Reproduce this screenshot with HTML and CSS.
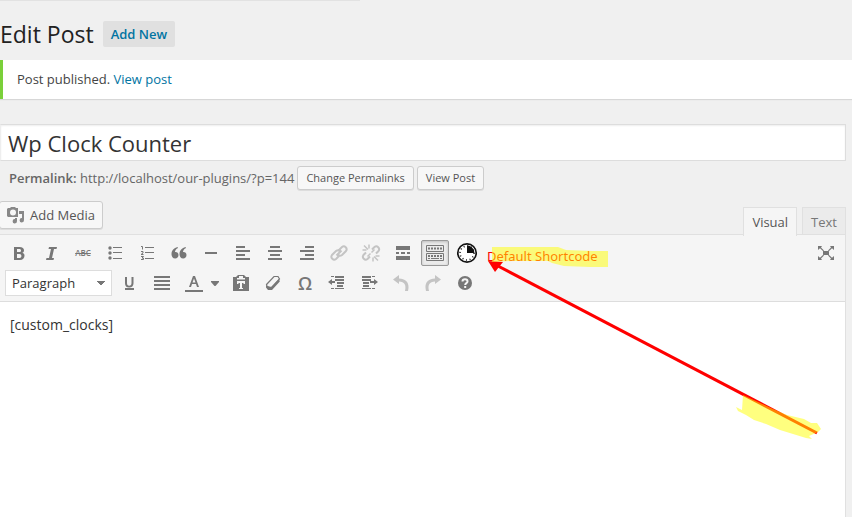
FILE: index.html
```html
<!DOCTYPE html>
<html lang="en">
<head>
<meta charset="utf-8">
<title>Edit Post</title>
<link rel="stylesheet" href="styles.css">
</head>
<body>
<main class="page">
  <div class="screen-meta"></div>
  <header class="heading">
    <h1>Edit Post</h1>
    <a class="add-new" href="#">Add New</a>
  </header>
  <div class="notice"><p>Post published. <a href="#">View post</a></p></div>

  <div class="post-body">
    <input class="title" type="text" value="Wp Clock Counter" aria-label="Title">
    <div class="permalink">
      <span><strong>Permalink:</strong> http://localhost/our-plugins/?p=144</span>
      <button class="button small" type="button">Change Permalinks</button>
      <button class="button small" type="button">View Post</button>
    </div>

    <div class="editor-tools">
      <button class="button media" type="button">
        <svg width="18" height="18" viewBox="0 0 18 18" aria-hidden="true"><path fill="#888" fill-rule="evenodd" d="M1 2h2l1-1h4l1 1h2v9H1L0 10V3zM6 3.500a3 3 0 1 0 0 6a3 3 0 0 0 0-6z"/><path fill="#888" d="M12 5h5v9a2.200 2.200 0 1 1-2-2V8h-3zM8 12h2v3a2.200 2.200 0 1 1-2-2z"/></svg>
        Add Media</button>
      <div class="tabs">
        <button class="tab active" type="button">Visual</button>
        <button class="tab" type="button">Text</button>
      </div>
    </div>

    <section class="editor">
      <div class="toolbar">
        <div class="row">
          <button class="tool" type="button" aria-label="Bold"><svg viewBox="0 0 20 20"><path fill-rule="evenodd" d="M5 4h5.500C13.500 4 15 5.300 15 7.200c0 1.300-.7 2.200-1.700 2.600 1.400.4 2.200 1.400 2.200 2.900 0 2.200-1.700 4.300-4.500 4.300H5zm3 2v3h2.200c1.200 0 1.800-.5 1.800-1.500S11.400 6 10.200 6zm0 5v4h2.600c1.200 0 1.800-.8 1.800-2 0-1.300-.6-2-1.900-2z"/></svg></button>
          <button class="tool" type="button" aria-label="Italic"><svg viewBox="0 0 20 20"><path d="M8 4h8l-.5 2h-2.500L11 15h2l-.5 2H5l.5-2H8l2-9H7.500z"/></svg></button>
          <button class="tool" type="button" aria-label="Strikethrough"><s class="abc">ABC</s></button>
          <button class="tool" type="button" aria-label="Bulleted list"><svg viewBox="0 0 20 20"><path d="M8 4h9v1H8zM8 9h9v1H8zM8 15h9v1H8z"/><circle cx="5" cy="5" r="1.700"/><circle cx="5" cy="10" r="1.700"/><circle cx="5" cy="15" r="1.700"/></svg></button>
          <button class="tool" type="button" aria-label="Numbered list"><svg viewBox="0 0 20 20"><path d="M8 4h9v1H8zM8 9h9v1H8zM8 15h9v1H8z"/><path class="line" stroke-width="1" d="M4 3.500h1.500v3M4 8.500h2v1.500L4 11.500h2.500M4 13.500h2.500L5 15h1.500v1.500H4"/></svg></button>
          <button class="tool" type="button" aria-label="Quote"><svg viewBox="0 0 20 20"><path d="M8.500 4L9 5C7 6 6 7.500 6 9c2-.3 3.500 1 3.500 3S8 15.500 6.200 15.500C3.800 15.500 2.500 13.700 2.500 11c0-3.500 2.500-6 6-7zM16.500 4l.5 1c-2 1-3 2.500-3 4 2-.3 3.500 1 3.500 3S16 15.500 14.200 15.500c-2.400 0-3.700-1.800-3.700-4.500 0-3.500 2.500-6 6-7z"/></svg></button>
          <button class="tool" type="button" aria-label="Horizontal line"><svg viewBox="0 0 20 20"><path d="M4 9h12v2H4z"/></svg></button>
          <button class="tool" type="button" aria-label="Align left"><svg viewBox="0 0 20 20"><path d="M3 3h9v2H3zM3 7h14v2H3zM3 11h9v2H3zM3 15h14v2H3z"/></svg></button>
          <button class="tool" type="button" aria-label="Align center"><svg viewBox="0 0 20 20"><path d="M5 3h10v2H5zM3 7h14v2H3zM5 11h10v2H5zM3 15h14v2H3z"/></svg></button>
          <button class="tool" type="button" aria-label="Align right"><svg viewBox="0 0 20 20"><path d="M8 3h9v2H8zM3 7h14v2H3zM8 11h9v2H8zM3 15h14v2H3z"/></svg></button>
          <button class="tool dim" type="button" aria-label="Insert link"><svg viewBox="0 0 20 20"><path class="line" stroke-width="2" d="M9 8l4-4c2.500-2 6 1.200 4 4l-4 4c-1.200 1-2.800 1-4 0M11 12l-4 4c-2.500 2-6-1.200-4-4l4-4c1.200-1 2.800-1 4 0M7.500 12.500l5-5"/></svg></button>
          <button class="tool dim" type="button" aria-label="Remove link"><svg viewBox="0 0 20 20"><path class="line" stroke-width="2" d="M11 6.500l2.500-2.500c2.500-2 6 1.200 4 4L15 10.500M9 13.500L6.500 16c-2.500 2-6-1.200-4-4L5 9.500"/><path class="line" stroke-width="1.500" d="M8 1.500v4M3 2.500l4 4M1.500 7h4M12 14.500v4M13 13.500l4 4M14.500 13h4M6.500 13.500l3-3M10.500 9.500l3-3"/></svg></button>
          <button class="tool" type="button" aria-label="Read more"><svg viewBox="0 0 20 20"><path d="M3 3h14v4H3zM3 9h3v2H3zM8 9h4v2H8zM14 9h3v2h-3zM3 13h14v4H3z"/></svg></button>
          <button class="tool pressed" type="button" aria-label="Toolbar toggle"><svg viewBox="0 0 20 20"><path class="line" stroke-width="1" d="M1.500 2.500h17v6h-17zM1.500 10.500h17v7h-17z"/><path class="line" stroke-width="2" stroke-dasharray="2 1" d="M3 5.500h14M3 13h14"/><path class="line" stroke-width="1" d="M3 15.500h2M6 15.500h8M15 15.500h2"/></svg></button>
          <button class="tool clock" type="button" aria-label="Clock"><svg viewBox="0 0 22 22"><circle cx="11" cy="11" r="9.200" fill="#fff" stroke="#111" stroke-width="1.700"/><circle cx="11" cy="11" r="7" fill="none" stroke="#111" stroke-width="1.600" stroke-dasharray="1 2.665"/><path fill="#111" d="M11 3.500v7.500h7.500A7.500 7.500 0 0 0 11 3.500z"/></svg></button>
          <button class="tool fullscreen" type="button" aria-label="Distraction-free writing"><svg viewBox="0 0 20 20"><path d="M7 8h6v4H7zM2 3h4L5 4.500l3 3-.8.800-3.200-3L2 7zM18 3h-4l1 1.500-3 3 .8.800 3.200-3L18 7zM2 17h4l-1-1.500 3-3-.8-.8-3.200 3L2 13zM18 17h-4l1-1.500-3-3 .8-.8 3.200 3L18 13z"/></svg></button>
        </div>
        <div class="row">
          <select class="format" aria-label="Format"><option>Paragraph</option></select>
          <button class="tool" type="button" aria-label="Underline"><svg viewBox="0 0 20 20"><path d="M5 4h2v6c0 2 .7 2.700 2.200 2.700s2.300-.8 2.300-2.700V4h2v6.200c0 2.800-1.600 4.200-4.300 4.200S5 13 5 10.200zM5 15h9v2H5z"/></svg></button>
          <button class="tool" type="button" aria-label="Justify"><svg viewBox="0 0 20 20"><path d="M2 3h16v2H2zM2 7h16v2H2zM2 11h16v2H2zM2 15h16v2H2z"/></svg></button>
          <button class="tool color" type="button" aria-label="Text color"><svg viewBox="0 0 20 20"><path fill-rule="evenodd" d="M9 3h2l4 11h-2l-1-3H8l-1 3H5zm1 2.500L8.500 9.500h3zM1 17h18v2H1z"/></svg></button>
          <button class="tool caret" type="button" aria-label="Choose color"><svg viewBox="0 0 10 20"><path d="M1 8h8v1L5.500 13h-1L1 9z"/></svg></button>
          <button class="tool" type="button" aria-label="Paste as text"><svg viewBox="0 0 20 20"><path fill-rule="evenodd" d="M2 4h3l2-2h6l2 2h3v14H2zM8 3v2h4V3zM6 5v1.500h8V5zM6 8v3h1.500v-1H9v5H8v1h4v-1h-1v-5h1.500v1H14V8z"/></svg></button>
          <button class="tool" type="button" aria-label="Clear formatting"><svg viewBox="0 0 20 20"><path class="line" stroke-width="1.200" d="M3.500 11.500l7.500-8h4l1.500 2.500-8 8.500-4.500-1z"/><path d="M3 11l.5 2 4.500 1.500L16 6l.8 2.500L9 17H5l-2-2.500z"/></svg></button>
          <button class="tool" type="button" aria-label="Special character"><span class="omega">Ω</span></button>
          <button class="tool" type="button" aria-label="Decrease indent"><svg viewBox="0 0 20 20"><path d="M4 3h3v1H4zM8 3h9v2H8zM8 6h9v2H8zM10 9h7v2h-7zM10 12h6v2h-6zM8 15h9v1H8zM4 15h3v1H4zM1 9l4-3v2h3v2H5v2z"/></svg></button>
          <button class="tool" type="button" aria-label="Increase indent"><svg viewBox="0 0 20 20"><path d="M3 3h9v2H3zM13 3h3v1h-3zM3 6h9v2H3zM4 9h6v2H4zM4 12h6v2H4zM3 15h9v1H3zM13 15h3v1h-3zM19 9l-4-3v2h-4v2h4v2z"/></svg></button>
          <button class="tool dim" type="button" aria-label="Undo"><svg viewBox="0 0 20 20"><path d="M8 2v3.500c6 0 10 3.500 9.500 9.500L17 18h-3c1.500-6-.5-9.500-6-9.500V11L2 6.500z"/></svg></button>
          <button class="tool dim" type="button" aria-label="Redo"><svg viewBox="0 0 20 20"><path d="M12 2v3.500c-6 0-10 3.500-9.500 9.500L3 18h3c-1.500-6 .5-9.500 6-9.500V11l6-4.500z"/></svg></button>
          <button class="tool" type="button" aria-label="Help"><svg viewBox="0 0 20 20"><circle cx="10" cy="10" r="7"/><path fill="none" stroke="#f5f5f5" stroke-width="2" d="M7.500 8.500c0-3 5-3 5 0 0 1.800-2.300 1.500-2.300 3.500M10.200 13v2"/></svg></button>
        </div>
      </div>
      <div class="content" contenteditable="true" role="textbox" aria-label="Post content">[custom_clocks]</div>
    </section>
  </div>

  <div class="annotation">
    <span class="note">Default Shortcode</span>
    <svg width="852" height="517" viewBox="0 0 852 517" aria-hidden="true">
      <path d="M817 433L498 266" stroke="#f00" stroke-width="3"/>
      <path d="M488 261l15 1-8 10z" fill="#f00"/>
      <path fill="#ff0" fill-opacity=".5" d="M492 247h66l8 3 27 1h15v16h-18l-26-1-12-3-4-2h-36l-20 1zM743 395l30 14 14 6 17 4 7 4h6l4 6-3 3-9 4 3 3-6-1-26-8-14-6-12-4-8-5-8-4-2-4 6 3z"/>
    </svg>
  </div>
</main>
</body>
</html>
```
FILE: styles.css
```css
* { box-sizing: border-box; }

body {
  margin: 0;
  background: #f0f0f0;
  color: #444;
  font: 13px/20px "Open Sans", sans-serif;
}

button, input, select { font: inherit; color: inherit; margin: 0; }
a { color: #0074a2; text-decoration: none; }

.page {
  position: relative;
  display: flex;
  flex-direction: column;
  min-height: 100vh;
  overflow: hidden;
}

.screen-meta {
  width: 360px;
  height: 1px;
  background: #e2e2e2;
}

.heading {
  display: flex;
  align-items: center;
  gap: 9px;
  padding-top: 18px;
}

h1 {
  margin: 0;
  color: #222;
  font-size: 23px;
  font-weight: 400;
  line-height: 30px;
}

.add-new {
  padding: 3px 8px;
  border-radius: 2px;
  background: #e0e0e0;
  font-weight: 600;
}

.notice {
  margin-top: 11px;
  padding: 9px 14px 10px;
  border-left: 3px solid #7ad03a;
  background: #fff;
  box-shadow: 0 1px 1px rgba(0, 0, 0, .1);
}

.notice p { margin: 0; }

.post-body {
  display: flex;
  flex: 1;
  flex-direction: column;
  margin: 25px 6px 0 0;
}

.title {
  width: 100%;
  height: 37px;
  padding: 3px 7px;
  border: 1px solid #ddd;
  border-left-color: #eee;
  background: #fff;
  box-shadow: inset 0 1px 2px rgba(0, 0, 0, .07);
  color: #333;
  font-size: 22px;
}

.permalink {
  display: flex;
  align-items: center;
  gap: 3px;
  padding: 5px 9px 0;
  color: #666;
}

.permalink strong { font-weight: 600; }

.button {
  border: 1px solid #ccc;
  border-radius: 3px;
  background: #f7f7f7;
  box-shadow: 0 1px 0 rgba(0, 0, 0, .08);
  color: #555;
  white-space: nowrap;
}

.small {
  height: 24px;
  padding: 0 8px;
  font-size: 11px;
}

.editor-tools {
  display: flex;
  align-items: flex-start;
  justify-content: space-between;
  margin-top: 11px;
}

.media {
  display: flex;
  align-items: center;
  gap: 5px;
  height: 28px;
  margin-left: -1px;
  padding: 0 7px;
}

.tabs {
  display: flex;
  gap: 5px;
  padding-top: 6px;
}

.tab {
  height: 28px;
  padding: 0 8px;
  border: 1px solid #e0e0e0;
  border-bottom: 0;
  background: #ebebeb;
  color: #777;
}

.tab.active {
  position: relative;
  z-index: 1;
  margin-bottom: -1px;
  height: 29px;
  background: #f5f5f5;
  color: #555;
}

.editor {
  display: flex;
  flex: 1;
  flex-direction: column;
  margin-top: -1px;
  border: 1px solid #e0e0e0;
  border-width: 1px 1px 0 0;
  background: #fff;
}

.toolbar {
  padding: 3px 5px;
  border-bottom: 1px solid #ddd;
  background: #f5f5f5;
}

.row {
  display: flex;
  align-items: center;
  gap: 4px;
  height: 30px;
}

.tool {
  display: flex;
  flex: none;
  align-items: center;
  justify-content: center;
  width: 28px;
  height: 26px;
  padding: 0;
  border: 1px solid transparent;
  border-radius: 2px;
  background: none;
  color: #777;
}

.tool svg {
  width: 20px;
  height: 20px;
  fill: currentColor;
}

.tool .line { fill: none; stroke: currentColor; }
.tool.dim { color: #c4c4c4; }

.tool.pressed {
  border-color: #999;
  background: #ebebeb;
  box-shadow: inset 0 1px 3px rgba(0, 0, 0, .2);
}

.tool.clock svg { width: 22px; height: 22px; }
.tool.fullscreen { margin-left: auto; }

.abc {
  font-size: 8px;
  font-weight: 600;
}

.omega {
  font-size: 18px;
  font-weight: 600;
}

.format {
  width: 107px;
  height: 26px;
  padding: 0 6px;
  border: 1px solid #ddd;
  appearance: none;
  background: #fff;
  background-image: linear-gradient(to bottom left, #777 50%, transparent 50%), linear-gradient(to bottom right, #777 50%, transparent 50%);
  background-position: right 10px top 10px, right 6px top 10px;
  background-size: 4px 5px;
  background-repeat: no-repeat;
  color: #333;
}

.tool.caret { width: 12px; margin: 0 2px 0 -3px; }
.tool.caret svg { width: 10px; }

.content {
  flex: 1;
  padding: 13px 10px;
  outline: 0;
  color: #333;
  font-size: 14px;
}

.annotation {
  position: absolute;
  inset: 0;
  pointer-events: none;
}

.annotation svg {
  position: relative;
  display: block;
}

.note {
  position: absolute;
  top: 246px;
  left: 487px;
  color: #f00;
  font-family: "Noto Sans", sans-serif;
  white-space: nowrap;
}
```
